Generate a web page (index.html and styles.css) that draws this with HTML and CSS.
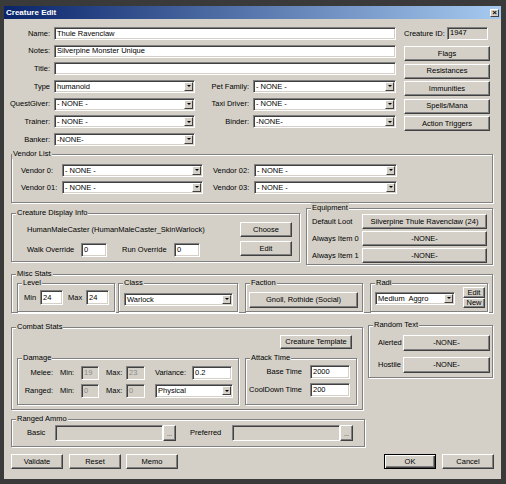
FILE: index.html
```html
<!DOCTYPE html>
<html lang="en">
<head>
    <meta charset="UTF-8">
    <title>Creature Edit</title>
    <link rel="stylesheet" href="styles.css">
</head>
<body>
    <div class="window">
        <div class="titlebar">
            <span>Creature Edit</span>
            <span class="close">×</span>
        </div>
        <div class="client">

            <div class="top">
                <div class="fields">
                    <div class="row"><span class="lbl">Name:</span><div class="edit full">Thule Ravenclaw</div></div>
                    <div class="row"><span class="lbl">Notes:</span><div class="edit full">Silverpine Monster Unique</div></div>
                    <div class="row"><span class="lbl">Title:</span><div class="edit full"></div></div>
                    <div class="row">
                        <span class="lbl">Type</span><div class="edit combo c-left">humanoid<span class="arrow"></span></div>
                        <span class="lbl mid">Pet Family:</span><div class="edit combo c-right">- NONE -<span class="arrow"></span></div>
                    </div>
                    <div class="row">
                        <span class="lbl">QuestGiver:</span><div class="edit combo c-left">- NONE -<span class="arrow"></span></div>
                        <span class="lbl mid">Taxi Driver:</span><div class="edit combo c-right">- NONE -<span class="arrow"></span></div>
                    </div>
                    <div class="row">
                        <span class="lbl">Trainer:</span><div class="edit combo c-left">- NONE -<span class="arrow"></span></div>
                        <span class="lbl mid">Binder:</span><div class="edit combo c-right">-NONE-<span class="arrow"></span></div>
                    </div>
                    <div class="row"><span class="lbl">Banker:</span><div class="edit combo c-left">-NONE-<span class="arrow"></span></div></div>
                </div>
                <div class="side">
                    <div class="id-row"><span class="id-lbl">Creature ID:</span><div class="edit readonly id-box">1947</div></div>
                    <div class="btn side-btn">Flags</div>
                    <div class="btn side-btn">Resistances</div>
                    <div class="btn side-btn">Immunities</div>
                    <div class="btn side-btn">Spells/Mana</div>
                    <div class="btn side-btn">Action Triggers</div>
                </div>
            </div>

            <div class="group vendors">
                <span class="gtitle tight">Vendor List</span>
                <div class="vrow">
                    <span class="vlbl">Vendor 0:</span><div class="edit combo v-left">- NONE -<span class="arrow"></span></div>
                    <span class="vlbl second">Vendor 02:</span><div class="edit combo v-right">- NONE -<span class="arrow"></span></div>
                </div>
                <div class="vrow">
                    <span class="vlbl">Vendor 01:</span><div class="edit combo v-left">- NONE -<span class="arrow"></span></div>
                    <span class="vlbl second">Vendor 03:</span><div class="edit combo v-right">- NONE -<span class="arrow"></span></div>
                </div>
            </div>

            <div class="row3">
                <div class="group display">
                    <span class="gtitle">Creature Display Info</span>
                    <div class="disp-left">
                        <div class="model">HumanMaleCaster (HumanMaleCaster_SkinWarlock)</div>
                        <div class="over-row">
                            <span class="walk-lbl">Walk Override</span><div class="edit walk">0</div>
                            <span class="run-lbl">Run Override</span><div class="edit run">0</div>
                        </div>
                    </div>
                    <div class="disp-btns">
                        <div class="btn disp-btn">Choose</div>
                        <div class="btn disp-btn">Edit</div>
                    </div>
                </div>
                <div class="group equip">
                    <span class="gtitle">Equipment</span>
                    <div class="eq-row"><span class="eq-lbl">Default Loot</span><div class="btn eq-btn">Silverpine Thule Ravenclaw (24)</div></div>
                    <div class="eq-row"><span class="eq-lbl">Always Item 0</span><div class="btn eq-btn">-NONE-</div></div>
                    <div class="eq-row"><span class="eq-lbl">Always Item 1</span><div class="btn eq-btn">-NONE-</div></div>
                </div>
            </div>

            <div class="group misc">
                <span class="gtitle">Misc Stats</span>
                <div class="group level">
                    <span class="gtitle">Level</span>
                    <span class="min-lbl">Min</span><div class="edit lvl">24</div>
                    <span class="max-lbl">Max</span><div class="edit lvl">24</div>
                </div>
                <div class="group klass">
                    <span class="gtitle">Class</span>
                    <div class="edit combo class-box">Warlock<span class="arrow"></span></div>
                </div>
                <div class="group faction">
                    <span class="gtitle">Faction</span>
                    <div class="btn faction-btn">Gnoll, Rothide (Social)</div>
                </div>
                <div class="group radi">
                    <span class="gtitle">Radi</span>
                    <div class="edit combo radi-box">Medium&nbsp; Aggro<span class="arrow"></span></div>
                    <div class="radi-btns">
                        <div class="btn radi-edit">Edit</div>
                        <div class="btn radi-new">New</div>
                    </div>
                </div>
            </div>

            <div class="row5">
                <div class="group combat">
                    <span class="gtitle">Combat Stats</span>
                    <div class="tmpl-row"><div class="btn tmpl-btn">Creature Template</div></div>
                    <div class="combat-subs">
                        <div class="group damage">
                            <span class="gtitle">Damage</span>
                            <div class="dmg-row">
                                <span class="dmg-lbl">Melee:</span>
                                <span class="min-l">Min:</span><div class="edit disabled dmin">19</div>
                                <span class="max-l">Max:</span><div class="edit disabled dmax">23</div>
                                <span class="var-l">Variance:</span><div class="edit var">0.2</div>
                            </div>
                            <div class="dmg-row">
                                <span class="dmg-lbl">Ranged:</span>
                                <span class="min-l">Min:</span><div class="edit disabled dmin">0</div>
                                <span class="max-l">Max:</span><div class="edit disabled dmax">0</div>
                                <div class="edit combo school">Physical<span class="arrow"></span></div>
                            </div>
                        </div>
                        <div class="group attack">
                            <span class="gtitle">Attack Time</span>
                            <div class="atk-row"><span class="atk-lbl">Base Time</span><div class="edit atk">2000</div></div>
                            <div class="atk-row"><span class="atk-lbl">CoolDown Time</span><div class="edit atk">200</div></div>
                        </div>
                    </div>
                </div>
                <div class="group random">
                    <span class="gtitle">Random Text</span>
                    <div class="rt-row"><span class="rt-lbl">Alerted</span><div class="btn rt-btn">-NONE-</div></div>
                    <div class="rt-row"><span class="rt-lbl">Hostile</span><div class="btn rt-btn">-NONE-</div></div>
                </div>
            </div>

            <div class="group ammo">
                <span class="gtitle">Ranged Ammo</span>
                <span class="basic-lbl">Basic</span><div class="edit disabled ammo-box"></div><div class="btn dots">...</div>
                <span class="pref-lbl">Preferred</span><div class="edit disabled ammo-box"></div><div class="btn dots">...</div>
            </div>

            <div class="bottom">
                <div class="btn cmd">Validate</div>
                <div class="btn cmd reset">Reset</div>
                <div class="btn cmd memo">Memo</div>
                <div class="btn cmd default ok">OK</div>
                <div class="btn cmd cancel">Cancel</div>
            </div>

        </div>
    </div>
</body>
</html>
```

FILE: styles.css
```css
* { box-sizing: border-box; }
body { margin: 0; background: #3a3a3a; font-family: "Liberation Sans", Arial, sans-serif; font-size: 7.5px; color: #000; line-height: 1; white-space: nowrap; }

.window { width: 497px; height: 473px; margin: 6px 0 0 4px; background: #d4d0c8; }
.titlebar { height: 13px; display: flex; align-items: center; padding: 0 2px; background: linear-gradient(to right, #0a246a, #a6caf0); color: #fff; font-weight: bold; font-size: 8px; }
.close { margin-left: auto; width: 9px; height: 8px; display: flex; align-items: center; justify-content: center; background: #d4d0c8; color: #000; font-size: 8px; border: 1px solid; border-color: #fff #404040 #404040 #fff; }
.client { padding: 8px 7px 0 7px; }

/* common controls */
.edit { height: 13px; display: flex; align-items: center; padding-left: 2px; background: #fff; overflow: hidden; border: 1px solid; border-color: #808080 #fff #fff #808080; box-shadow: inset 1px 1px 0 #404040, inset -1px -1px 0 #d4d0c8; }
.edit.readonly, .edit.disabled { background: #d4d0c8; }
.edit.disabled { color: #8a8a8a; }
.combo { padding-right: 1px; }
.arrow { margin-left: auto; width: 9px; height: 9px; display: flex; align-items: center; justify-content: center; background: #d4d0c8; border: 1px solid; border-color: #fff #404040 #404040 #fff; }
.arrow::after { content: ""; border-left: 2px solid transparent; border-right: 2px solid transparent; border-top: 2px solid #000; }
.btn { display: flex; align-items: center; justify-content: center; background: #d4d0c8; border: 1px solid; border-color: #fff #404040 #404040 #fff; box-shadow: inset -1px -1px 0 #808080; }
.btn.default { border-color: #000; box-shadow: inset 1px 1px 0 #fff, inset -1px -1px 0 #404040, inset -2px -2px 0 #808080; }

.group { position: relative; border: 1px solid #808080; box-shadow: 1px 1px 0 #fff, inset 1px 1px 0 #fff; }
.gtitle { position: absolute; top: -6px; left: 4px; padding: 0 1px; line-height: 10px; background: #d4d0c8; }
.gtitle.tight { left: 0; }

/* top block */
.top { display: flex; }
.fields { width: 385px; }
.row { display: flex; align-items: center; height: 13px; margin-bottom: 4.67px; }
.row:last-child { margin-bottom: 0; }
.lbl { width: 39px; margin-right: 4px; display: flex; justify-content: flex-end; }
.lbl.mid { width: 54px; }
.full { width: 342px; }
.c-left { width: 141px; }
.c-right { width: 143px; }
.side { width: 86px; margin-left: 8px; }
.id-row { display: flex; align-items: center; height: 13px; margin-bottom: 6px; }
.id-lbl { flex: 1; }
.id-box { width: 41px; margin-right: 2px; align-items: flex-start; padding-top: 1px; }
.side-btn { height: 15px; margin-bottom: 2.5px; }

/* vendor list */
.vendors { width: 482px; height: 49px; margin-top: 8px; padding: 9px 0 0 9px; }
.vrow { display: flex; align-items: center; margin-bottom: 4px; }
.vlbl { width: 41px; }
.vlbl.second { margin-left: 10px; }
.v-left { width: 141px; }
.v-right { width: 143px; }

/* display + equipment */
.row3 { display: flex; align-items: flex-start; margin-top: 5px; }
.display { width: 289px; height: 49px; margin-top: 5px; display: flex; padding: 8px 7px 0 15px; }
.model { height: 15px; display: flex; align-items: center; }
.over-row { display: flex; align-items: center; margin-top: 6px; }
.walk-lbl { width: 54px; }
.walk { width: 26px; height: 14px; }
.run-lbl { width: 52px; margin-left: 15px; }
.run { width: 26px; height: 14px; }
.disp-btns { margin-left: auto; }
.disp-btn { width: 52px; height: 15px; margin-bottom: 4px; }
.equip { width: 187px; height: 57px; margin-left: 6px; padding: 5px 0 0 5px; }
.eq-row { display: flex; align-items: center; margin-bottom: 2px; }
.eq-lbl { width: 50px; }
.eq-btn { width: 125px; height: 15px; }

/* misc stats */
.misc { width: 482px; height: 39px; margin-top: 9px; display: flex; align-items: flex-start; padding: 8px 0 0 5px; }
.level { width: 98px; height: 29px; display: flex; align-items: center; padding: 0 0 0 6px; }
.min-lbl { width: 16px; }
.max-lbl { width: 18px; margin-left: 5px; }
.lvl { width: 23px; height: 15px; }
.klass { width: 120px; height: 29px; margin-left: 3px; padding: 9px 0 0 5px; }
.class-box { width: 109px; }
.faction { width: 118px; height: 29px; margin-left: 7px; padding: 8px 0 0 3px; }
.faction-btn { width: 109px; height: 16px; }
.radi { width: 118px; height: 29px; margin-left: 7px; display: flex; align-items: flex-start; padding: 3px 0 0 4px; }
.radi-box { width: 80px; margin-top: 5px; }
.radi-btns { margin-left: 8px; }
.radi-edit { width: 22px; height: 11px; }
.radi-new { width: 22px; height: 10px; }

/* combat stats */
.row5 { display: flex; align-items: flex-start; margin-top: 12px; }
.combat { width: 352px; height: 83px; margin-top: 2px; padding: 7px 0 0 5px; }
.tmpl-row { display: flex; justify-content: flex-end; padding-right: 10px; }
.tmpl-btn { width: 72px; height: 14px; }
.combat-subs { display: flex; margin-top: 9px; }
.damage { width: 222px; height: 47px; padding-top: 7px; }
.dmg-row { display: flex; align-items: center; height: 14px; margin-bottom: 4px; }
.dmg-lbl { width: 35px; display: flex; justify-content: flex-end; }
.min-l { width: 21px; margin-left: 7px; }
.max-l { width: 20px; margin-left: 7px; }
.dmin { width: 18px; height: 14px; }
.dmax { width: 19px; height: 14px; }
.var-l { width: 37px; margin-left: 10px; }
.var { width: 40px; height: 14px; }
.school { width: 78px; height: 14px; margin-left: 10px; }
.attack { width: 112px; height: 47px; margin-left: 6px; padding-top: 6px; }
.atk-row { display: flex; align-items: center; margin-bottom: 4px; }
.atk-lbl { width: 56px; margin-right: 8px; display: flex; justify-content: flex-end; }
.atk { width: 40px; height: 14px; }
.random { width: 125px; height: 53px; margin-left: 5px; padding: 9px 0 0 9px; }
.rt-row { display: flex; align-items: center; margin-bottom: 6px; }
.rt-lbl { width: 25px; }
.rt-btn { width: 87px; height: 16px; }

/* ranged ammo */
.ammo { width: 354px; height: 28px; margin-top: 9px; display: flex; align-items: center; padding: 0 0 0 15px; }
.basic-lbl { width: 28px; }
.pref-lbl { width: 42px; margin-left: 14px; }
.ammo-box { width: 108px; height: 16px; }
.dots { width: 13px; height: 16px; align-items: flex-end; padding-bottom: 3px; font-size: 6px; }

/* command buttons */
.bottom { display: flex; margin-top: 7px; }
.cmd { width: 52px; height: 15px; }
.reset { margin-left: 6px; }
.memo { margin-left: 5px; }
.ok { margin-left: auto; }
.cancel { margin-left: 6px; }
```
